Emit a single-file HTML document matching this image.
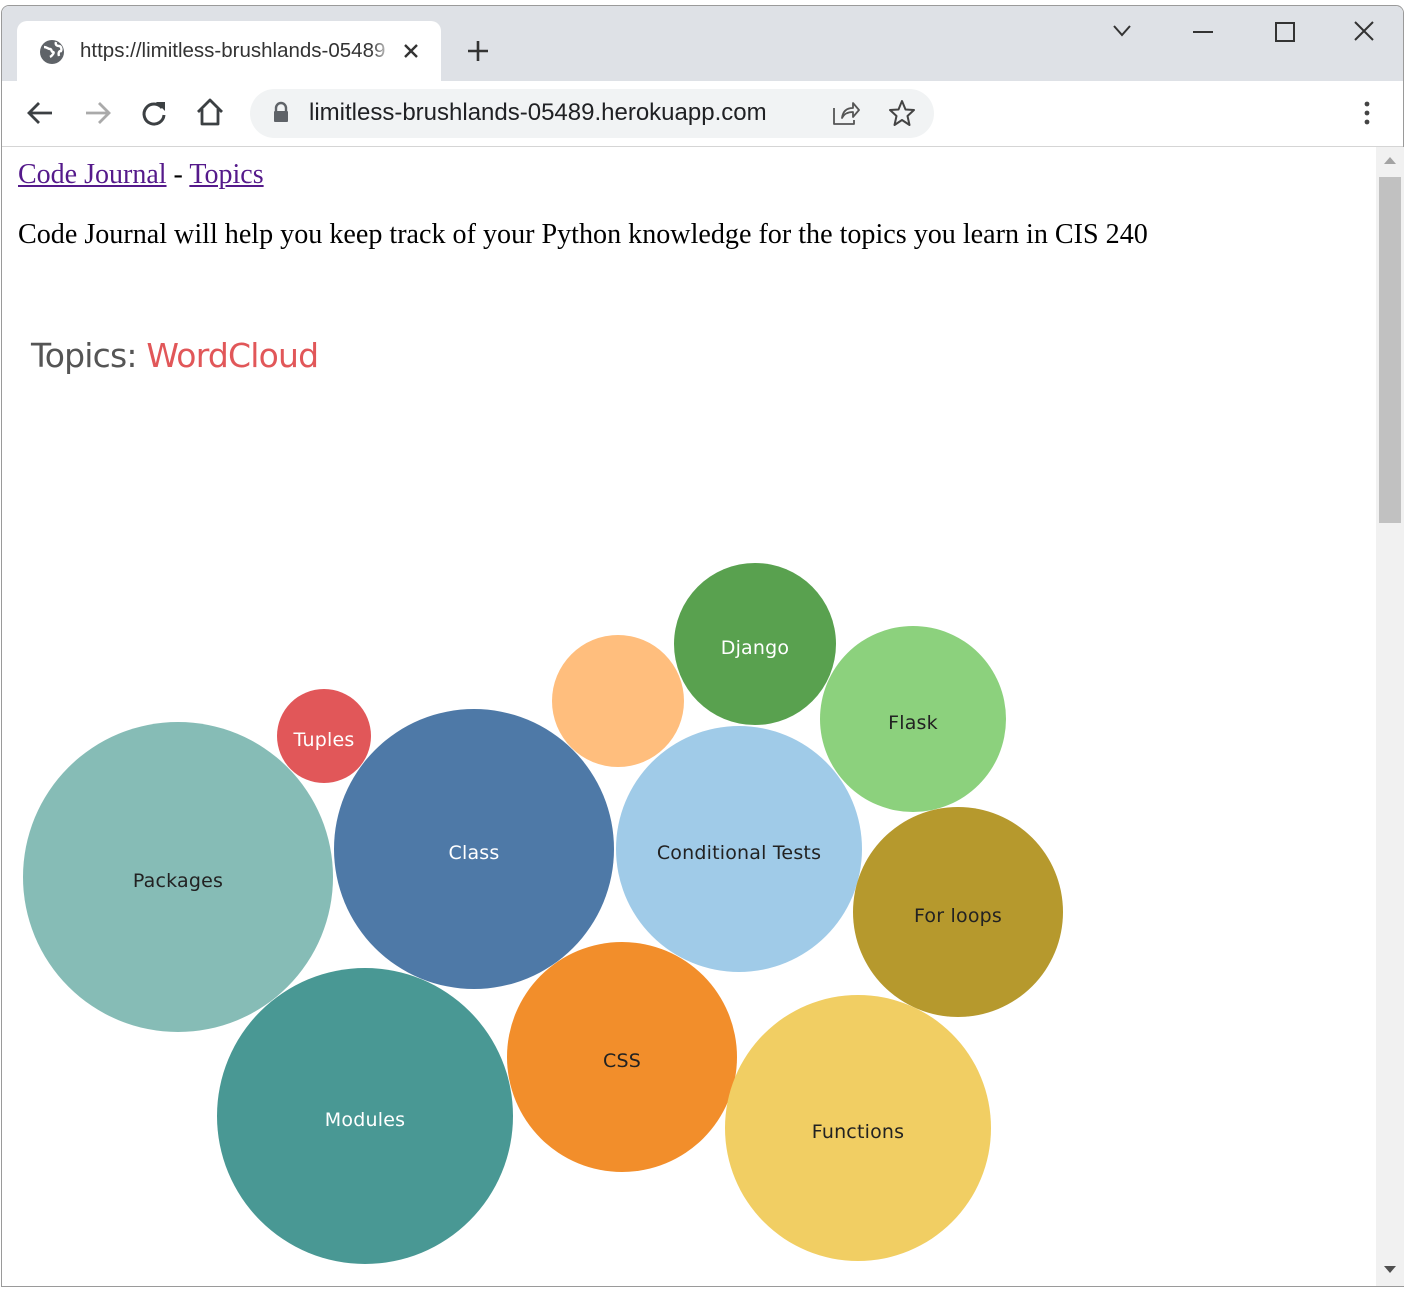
<!DOCTYPE html>
<html><head><meta charset="utf-8"><style>
html,body{margin:0;padding:0;width:1407px;height:1292px;overflow:hidden;background:#fff;position:relative;font-family:"Liberation Sans",sans-serif}
.abs{position:absolute}
.win{left:1px;top:5px;width:1403px;height:1282px;border:1px solid #9a9a9a;border-radius:8px 8px 0 0;overflow:hidden;box-sizing:border-box}
.c{position:absolute;border-radius:50%;display:flex;align-items:center;justify-content:center;font-family:"DejaVu Sans","Liberation Sans",sans-serif;font-size:19px;color:#222;letter-spacing:0.2px;padding-top:8px;box-sizing:border-box}
.w{color:#fff}
</style></head><body>
<div class="abs win">
 <div class="abs" style="left:0;top:0;width:1403px;height:75px;background:#dee1e6"></div>
 <div class="abs" style="left:15px;top:15px;width:424px;height:62px;background:#fff;border-radius:10px 10px 0 0"></div>
 <div class="abs" style="left:0;top:75px;width:1403px;height:65px;background:#fff;border-bottom:1px solid #d5d5d5"></div>
 <div class="abs" style="left:248px;top:83px;width:684px;height:49px;background:#f1f3f4;border-radius:25px"></div>
</div>
<svg class="abs" style="left:38px;top:38px" width="28" height="28" viewBox="0 0 28 28"><circle cx="14" cy="14" r="12" fill="#5f6368"/><path d="M6 9c3 0 4 2 6 2s1 3 3 3-1 4-3 5M18 4c-1 3 1 4 3 4s3 3 2 5c-2 0-3 2-2 5" stroke="#fff" stroke-width="2.4" fill="none"/></svg>
<div class="abs" style="left:80px;top:39px;font-size:20.5px;color:#333;white-space:nowrap;width:308px;overflow:hidden">https://limitless-brushlands-05489</div>
<div class="abs" style="left:370px;top:36px;width:24px;height:30px;background:linear-gradient(90deg,rgba(255,255,255,0),#fff)"></div>
<svg class="abs" style="left:402px;top:42px" width="18" height="18"><path d="M3 3L15 15M15 3L3 15" stroke="#333" stroke-width="2.4"/></svg>
<svg class="abs" style="left:466px;top:39px" width="24" height="24"><path d="M12 2V22M2 12H22" stroke="#333" stroke-width="2.6"/></svg>
<svg class="abs" style="left:1112px;top:24px" width="20" height="14"><path d="M2 2L10 11L18 2" stroke="#333" stroke-width="2" fill="none"/></svg>
<div class="abs" style="left:1193px;top:31px;width:20px;height:2px;background:#333"></div>
<div class="abs" style="left:1275px;top:22px;width:16px;height:16px;border:2px solid #333"></div>
<svg class="abs" style="left:1354px;top:21px" width="20" height="20"><path d="M1 1L19 19M19 1L1 19" stroke="#333" stroke-width="2"/></svg>
<svg class="abs" style="left:26px;top:99px" width="28" height="28"><path d="M26 14H4M13 4L3 14L13 24" stroke="#3c4043" stroke-width="2.8" fill="none"/></svg>
<svg class="abs" style="left:84px;top:99px" width="28" height="28"><path d="M2 14H24M15 4L25 14L15 24" stroke="#aaa" stroke-width="2.8" fill="none"/></svg>
<svg class="abs" style="left:140px;top:99px" width="28" height="28"><path d="M22 9A10 10 0 1 0 24 16" stroke="#3c4043" stroke-width="3" fill="none"/><path d="M16 3H25V12Z" fill="#3c4043"/></svg>
<svg class="abs" style="left:195px;top:97px" width="30" height="30"><path d="M3 15L15 3L27 15M7 12V27H23V12" stroke="#3c4043" stroke-width="2.8" fill="none" stroke-linejoin="round"/></svg>
<svg class="abs" style="left:272px;top:101px" width="18" height="22"><path d="M4 10V7a5 5 0 0 1 10 0v3" stroke="#5f6368" stroke-width="2.4" fill="none"/><rect x="2" y="10" width="14" height="11" rx="1" fill="#5f6368"/></svg>
<div class="abs" style="left:309px;top:99px;font-size:24px;color:#202124">limitless-brushlands-05489.herokuapp.com</div>
<svg class="abs" style="left:832px;top:100px" width="28" height="26"><path d="M2 8V24H22V20M10 18C11 10 16 8 21 8V3L27 10L21 17V12C16 12 12 14 10 18Z" stroke="#555" stroke-width="1.8" fill="none" stroke-linejoin="round"/></svg>
<svg class="abs" style="left:888px;top:99px" width="28" height="28"><path d="M14 2L17.5 10.5L26 11L19.5 17L21.5 26L14 21L6.5 26L8.5 17L2 11L10.5 10.5Z" stroke="#444" stroke-width="2" fill="none" stroke-linejoin="round"/></svg>
<svg class="abs" style="left:1362px;top:100px" width="10" height="28"><circle cx="5" cy="4" r="2.4" fill="#444"/><circle cx="5" cy="13" r="2.4" fill="#444"/><circle cx="5" cy="22" r="2.4" fill="#444"/></svg>
<div class="abs" style="left:1376px;top:147px;width:28px;height:1139px;background:#f1f1f1"></div>
<div class="abs" style="left:1379px;top:177px;width:22px;height:346px;background:#c1c1c1"></div>
<svg class="abs" style="left:1383px;top:155px" width="14" height="10"><path d="M1 9L7 2L13 9Z" fill="#a3a3a3"/></svg>
<svg class="abs" style="left:1383px;top:1265px" width="14" height="10"><path d="M1 1L7 8L13 1Z" fill="#505050"/></svg>
<div class="abs" style="left:18px;top:159px;font-family:'Liberation Serif',serif;font-size:28px;color:#000;white-space:nowrap"><span style="color:#551a8b;text-decoration:underline">Code Journal</span> - <span style="color:#551a8b;text-decoration:underline">Topics</span></div>
<div class="abs" style="left:18px;top:219px;font-family:'Liberation Serif',serif;font-size:28.1px;color:#000;white-space:nowrap">Code Journal will help you keep track of your Python knowledge for the topics you learn in CIS 240</div>
<div class="abs" style="left:31px;top:336px;font-family:'DejaVu Sans',sans-serif;font-size:33px;color:#555;white-space:nowrap;letter-spacing:-0.8px">Topics: <span style="color:#e15759">WordCloud</span></div>
<div class="c w" style="left:674px;top:563px;width:162px;height:162px;background:#59a14f">Django</div>
<div class="c" style="left:552px;top:635px;width:132px;height:132px;background:#ffbe7d"></div>
<div class="c" style="left:820px;top:626px;width:186px;height:186px;background:#8cd17d">Flask</div>
<div class="c w" style="left:277px;top:689px;width:94px;height:94px;background:#e15759">Tuples</div>
<div class="c" style="left:23px;top:722px;width:310px;height:310px;background:#86bcb6">Packages</div>
<div class="c w" style="left:334px;top:709px;width:280px;height:280px;background:#4e79a7">Class</div>
<div class="c" style="left:616px;top:726px;width:246px;height:246px;background:#a0cbe8">Conditional Tests</div>
<div class="c" style="left:853px;top:807px;width:210px;height:210px;background:#b6992d">For loops</div>
<div class="c w" style="left:217px;top:968px;width:296px;height:296px;background:#499894">Modules</div>
<div class="c" style="left:507px;top:942px;width:230px;height:230px;background:#f28e2b">CSS</div>
<div class="c" style="left:725px;top:995px;width:266px;height:266px;background:#f1ce63">Functions</div>
</body></html>
